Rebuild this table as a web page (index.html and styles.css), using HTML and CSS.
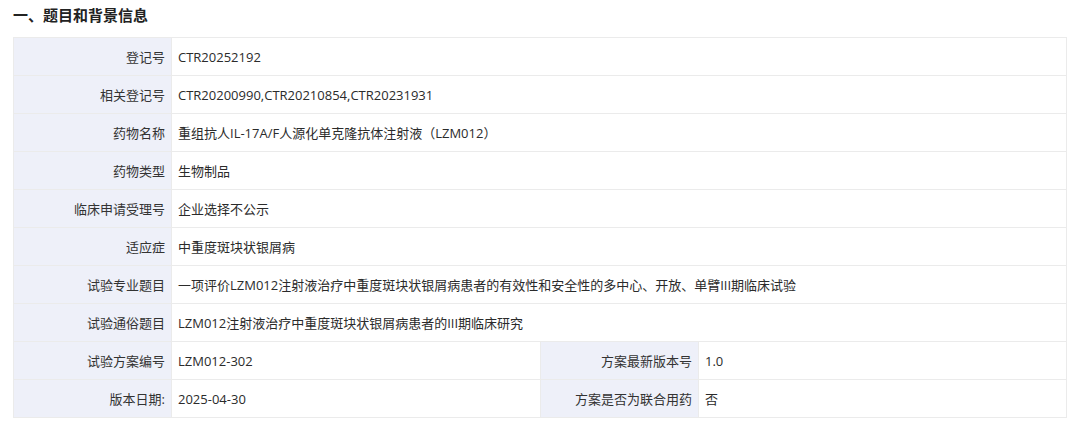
FILE: index.html
```html
<!DOCTYPE html>
<html lang="zh-CN">
<head>
<meta charset="utf-8">
<link rel="stylesheet" href="styles.css">
</head>
<body>
<div class="page">
  <h2 class="section-title">一、题目和背景信息</h2>
  <table class="info">
    <colgroup>
      <col class="c-label"><col class="c-value"><col class="c-label"><col class="c-value2">
    </colgroup>
    <tr><th>登记号</th><td colspan="3">CTR20252192</td></tr>
    <tr><th>相关登记号</th><td colspan="3">CTR20200990,CTR20210854,CTR20231931</td></tr>
    <tr><th>药物名称</th><td colspan="3">重组抗人IL-17A/F人源化单克隆抗体注射液（LZM012）</td></tr>
    <tr><th>药物类型</th><td colspan="3">生物制品</td></tr>
    <tr><th>临床申请受理号</th><td colspan="3">企业选择不公示</td></tr>
    <tr><th>适应症</th><td colspan="3">中重度斑块状银屑病</td></tr>
    <tr><th>试验专业题目</th><td colspan="3">一项评价LZM012注射液治疗中重度斑块状银屑病患者的有效性和安全性的多中心、开放、单臂III期临床试验</td></tr>
    <tr><th>试验通俗题目</th><td colspan="3">LZM012注射液治疗中重度斑块状银屑病患者的III期临床研究</td></tr>
    <tr><th>试验方案编号</th><td>LZM012-302</td><th>方案最新版本号</th><td>1.0</td></tr>
    <tr><th>版本日期:</th><td>2025-04-30</td><th>方案是否为联合用药</th><td>否</td></tr>
  </table>
</div>
</body>
</html>
```
FILE: styles.css
```css
html, body {
  margin: 0;
  padding: 0;
  background: #ffffff;
}
body {
  font-family: "Open Sans", "Noto Sans CJK SC", sans-serif;
  color: #333333;
}
.page {
  padding: 4px 14px 0 13px;
}
.section-title {
  margin: 0 0 11px 0;
  font-family: "Noto Sans CJK SC", sans-serif;
  font-size: 15px;
  font-weight: 700;
  line-height: 22px;
  color: #222222;
}
.info {
  width: 1053px;
  border-collapse: collapse;
  table-layout: fixed;
  font-size: 13px;
  font-family: "Open Sans", "Noto Sans CJK SC", sans-serif;
}
.c-label { width: 158px; }
.c-value { width: 369px; }
.c-value2 { width: 368px; }
.info th,
.info td {
  height: 37px;
  padding: 0 6px;
  border: 1px solid #ebebeb;
  vertical-align: middle;
  line-height: 18px;
  white-space: nowrap;
}
.info th {
  background: #eef0f9;
  text-align: right;
  font-weight: 400;
  color: #333333;
}
.info td {
  text-align: left;
  color: #2b2b2b;
}
```
